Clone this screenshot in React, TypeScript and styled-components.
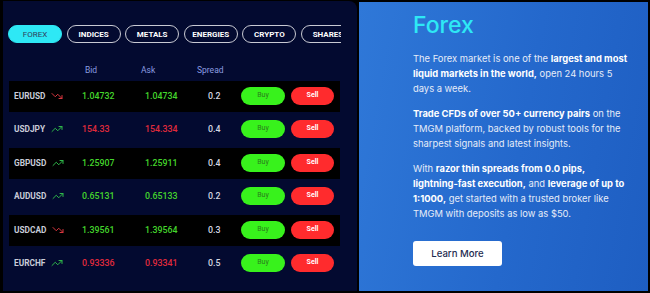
import styled, { createGlobalStyle } from 'styled-components';
import { TrendingUp, TrendingDown } from 'lucide-react';

const GlobalStyle = createGlobalStyle`
  html, body {
    margin: 0;
    padding: 0;
    background: #000;
  }
  body {
    font-family: Roboto, "Liberation Sans", sans-serif;
  }
`;

type Quote = {
  symbol: string;
  up: boolean;
  bid: string;
  ask: string;
  spread: string;
  rising: boolean;
};

const tabs = ['FOREX', 'INDICES', 'METALS', 'ENERGIES', 'CRYPTO', 'SHARES'];

const quotes: Quote[] = [
  { symbol: 'EURUSD', up: false, bid: '1.04732', ask: '1.04734', spread: '0.2', rising: true },
  { symbol: 'USDJPY', up: true, bid: '154.33', ask: '154.334', spread: '0.4', rising: false },
  { symbol: 'GBPUSD', up: true, bid: '1.25907', ask: '1.25911', spread: '0.4', rising: true },
  { symbol: 'AUDUSD', up: true, bid: '0.65131', ask: '0.65133', spread: '0.2', rising: true },
  { symbol: 'USDCAD', up: false, bid: '1.39561', ask: '1.39564', spread: '0.3', rising: true },
  { symbol: 'EURCHF', up: true, bid: '0.93336', ask: '0.93341', spread: '0.5', rising: false },
];

function App() {
  return (
    <>
      <GlobalStyle />
      <Page>
        <QuotesPanel>
          <TabStrip>
            {tabs.map((tab, i) => (
              <Tab key={tab} $active={i === 0}>
                {tab}
              </Tab>
            ))}
          </TabStrip>
          <HeadRow>
            <span />
            <HeadCell>Bid</HeadCell>
            <HeadCell>Ask</HeadCell>
            <HeadCell>Spread</HeadCell>
          </HeadRow>
          <Table>
            {quotes.map((q, i) => (
              <Row key={q.symbol} $striped={i % 2 === 0}>
                <Symbol>
                  {q.symbol}
                  {q.up ? (
                    <TrendingUp size={12} color="#2fb84a" strokeWidth={2} />
                  ) : (
                    <TrendingDown size={12} color="#d9363e" strokeWidth={2} />
                  )}
                </Symbol>
                <Price $rising={q.rising}>{q.bid}</Price>
                <Price $rising={q.rising}>{q.ask}</Price>
                <Spread>{q.spread}</Spread>
                <BuyButton>Buy</BuyButton>
                <SellButton>Sell</SellButton>
              </Row>
            ))}
          </Table>
        </QuotesPanel>
        <InfoPanel>
          <Title>Forex</Title>
          <Para>
            The Forex market is one of the <b>largest and most liquid markets in the world,</b> open
            24 hours 5 days a week.
          </Para>
          <Para>
            <b>Trade CFDs of over 50+ currency pairs</b> on the TMGM platform, backed by robust tools
            for the sharpest signals and latest insights.
          </Para>
          <Para>
            With <b>razor thin spreads from 0.0 pips, lightning&#8209;fast execution,</b> and{' '}
            <b>leverage of up to 1:1000,</b> get started with a trusted broker like TMGM with deposits
            as low as $50.
          </Para>
          <LearnMore>Learn More</LearnMore>
        </InfoPanel>
      </Page>
    </>
  );
}

export default App;

const Page = styled.div`
  width: 650px;
  height: 293px;
  box-sizing: border-box;
  padding: 1px 2px 2px 3px;
  display: flex;
  gap: 2px;
  background: #000;
  overflow: hidden;
`;

const QuotesPanel = styled.div`
  width: 354px;
  flex: none;
  box-sizing: border-box;
  padding: 24px 0 0 5px;
  background: #030a30;
  border-top-right-radius: 8px;
`;

const TabStrip = styled.div`
  width: 333px;
  display: flex;
  gap: 4.6px;
  overflow: hidden;
`;

const Tab = styled.div<{ $active: boolean }>`
  flex: none;
  width: 54px;
  height: 18px;
  box-sizing: border-box;
  border-radius: 9px;
  border: 1.5px solid ${(p) => (p.$active ? '#2ee8f5' : '#c9cad3')};
  background: ${(p) => (p.$active ? '#2ee8f5' : 'transparent')};
  color: ${(p) => (p.$active ? '#2f3d5c' : '#ffffff')};
  font-size: 8px;
  font-weight: ${(p) => (p.$active ? 400 : 700)};
  display: flex;
  align-items: center;
  justify-content: center;
  white-space: nowrap;
  overflow: hidden;
`;

const HeadRow = styled.div`
  display: grid;
  grid-template-columns: 76px 56px 56px 1fr;
  height: 12px;
  align-items: center;
  margin: 20.5px 0 5.5px 1px;
`;

const HeadCell = styled.span`
  font-size: 8.5px;
  color: #8b9de0;
`;

const Table = styled.div`
  width: 331px;
  margin-left: 1px;
  display: flex;
  flex-direction: column;
  gap: 2.5px;
`;

const Row = styled.div<{ $striped: boolean }>`
  height: 31px;
  box-sizing: border-box;
  padding-bottom: 2px;
  display: grid;
  grid-template-columns: 73px 63px 63px 33px 50px 44px;
  align-items: center;
  background: ${(p) => (p.$striped ? '#000000' : 'transparent')};
`;

const Symbol = styled.div`
  padding-left: 5px;
  display: flex;
  align-items: center;
  gap: 6px;
  font-size: 8.3px;
  font-weight: 700;
  color: #c9ccd8;
`;

const Price = styled.span<{ $rising: boolean }>`
  font-size: 8.8px;
  font-weight: 500;
  color: ${(p) => (p.$rising ? '#44d62c' : '#e02a3c')};
`;

const Spread = styled.span`
  font-size: 8.8px;
  font-weight: 500;
  color: #d4d6e0;
`;

const PillButton = styled.button`
  height: 18px;
  border: none;
  border-radius: 9px;
  padding: 0 0 2px;
  font-family: inherit;
  font-size: 7px;
  display: flex;
  align-items: center;
  justify-content: center;
  cursor: pointer;
`;

const BuyButton = styled(PillButton)`
  width: 44px;
  background: #38f21c;
  color: #2b7d1c;
`;

const SellButton = styled(PillButton)`
  width: 43px;
  background: #ff2b2d;
  color: #ffffff;
  font-weight: 700;
`;

const InfoPanel = styled.div`
  flex: 1;
  margin-top: 1px;
  box-sizing: border-box;
  padding: 9px 0 0 54px;
  background: linear-gradient(100deg, #2f78d8 0%, #2468cc 55%, #1e5ec2 100%);
  font-family: Inter, "Liberation Sans", sans-serif;
`;

const Title = styled.h2`
  margin: 0 0 12px;
  font-size: 23px;
  font-weight: 500;
  line-height: 28px;
  color: #2ee8f5;
`;

const Para = styled.p`
  width: 217px;
  margin: 0 0 10px;
  font-size: 9.4px;
  line-height: 15px;
  color: #e6ecf8;

  b {
    font-weight: 700;
    color: #ffffff;
  }
`;

const LearnMore = styled.button`
  margin-top: 10px;
  width: 89px;
  height: 25px;
  border: none;
  border-radius: 3px;
  background: #ffffff;
  color: #1e2b4f;
  font-family: inherit;
  font-size: 9.6px;
  font-weight: 500;
  cursor: pointer;
`;
